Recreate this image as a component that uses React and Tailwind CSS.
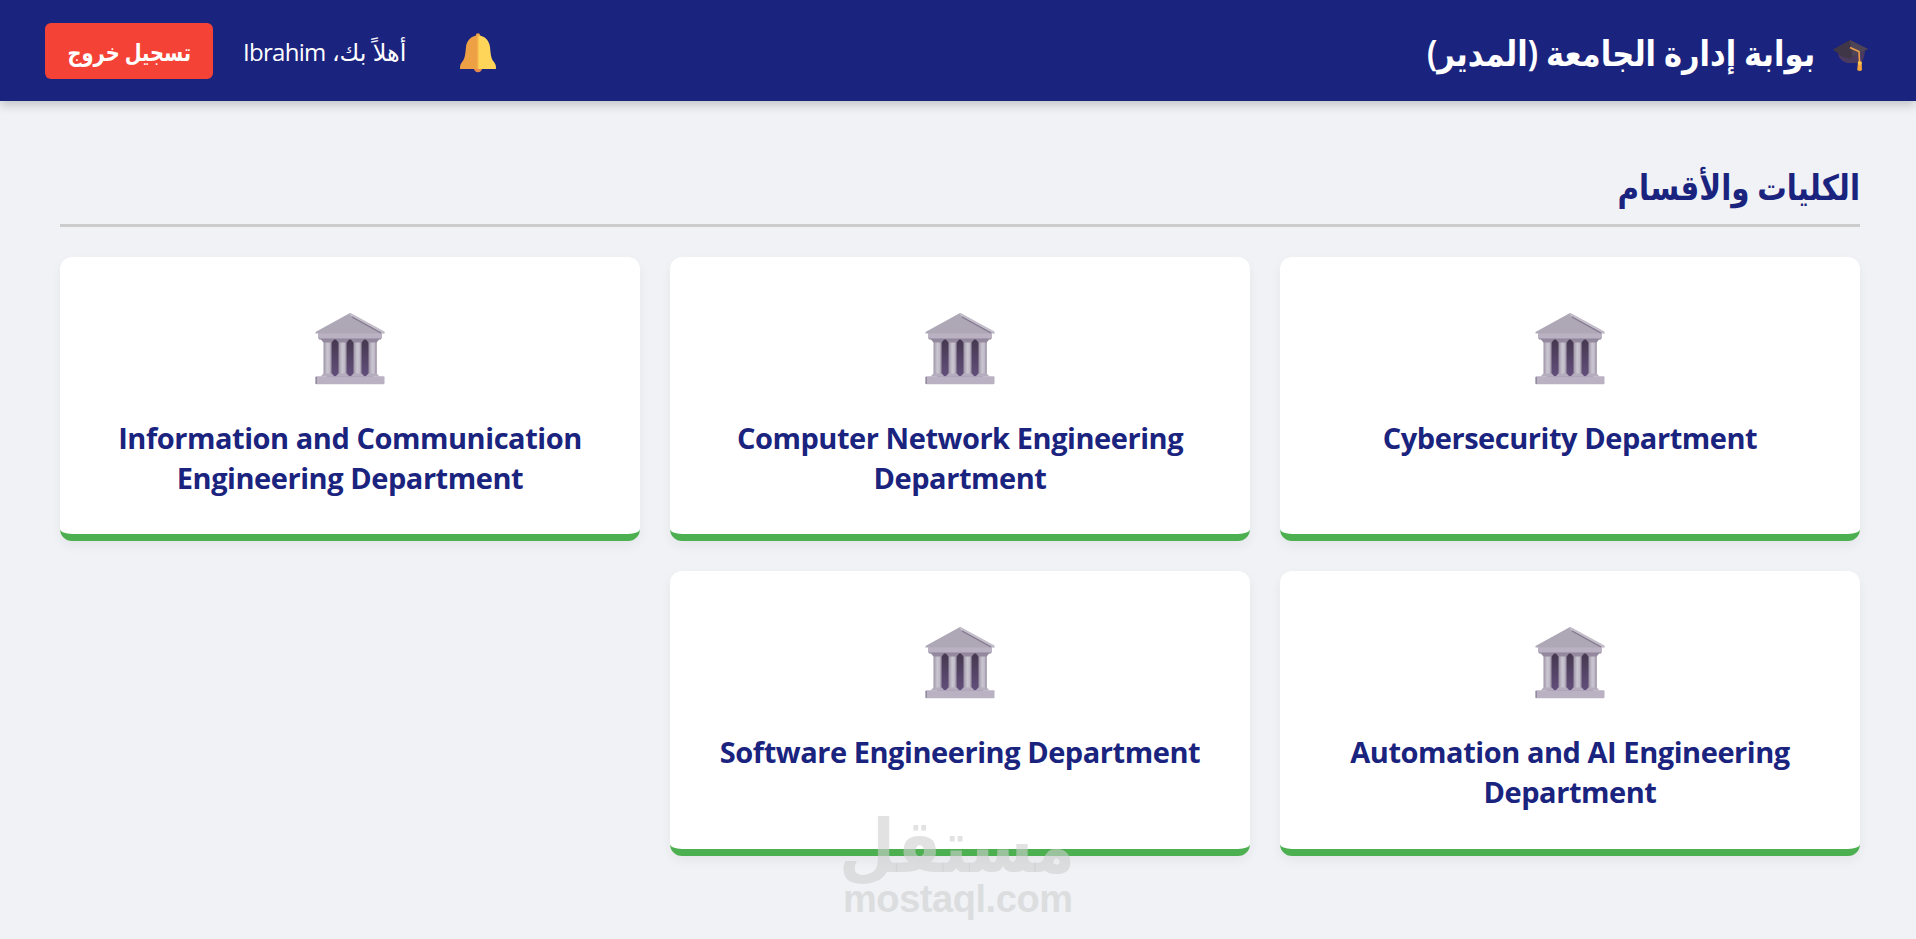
import React from "react";

const departments = [
  "Cybersecurity Department",
  "Computer Network Engineering Department",
  "Information and Communication Engineering Department",
  "Automation and AI Engineering Department",
  "Software Engineering Department",
];

function GraduationCap() {
  return (
    <svg className="mt-[10px] h-[38px] w-[38px]" viewBox="0 0 38 38">
      <path d="M6 15 L7 20 Q11 26 17 26 L28 26 Q31 24 32 20 L33 14 Z" fill="#4b3a60" />
      <path d="M1 12.5 L18 3 L36 12 L20.5 20 L17 22 L11 20 Z" fill="#3f3648" />
      <path d="M18 3 L36 12 L20.5 20 Z" fill="#4d4458" />
      <path d="M18 10.5 L27 14.5 L27.6 27" fill="none" stroke="#f0a04b" strokeWidth="1.6" />
      <path d="M26 25 H29.6 L30 33 Q28 35 25.2 33 Z" fill="#f6a33f" />
      <circle cx="27.8" cy="26" r="2" fill="#fbc14e" />
    </svg>
  );
}

function Bell() {
  return (
    <svg className="mt-[5px] h-[40px] w-[36px]" viewBox="0 0 36 40">
      <defs>
        <linearGradient id="bell" x1="0" x2="1">
          <stop offset="0.46" stopColor="#eea045" />
          <stop offset="0.54" stopColor="#ffd559" />
        </linearGradient>
      </defs>
      <circle cx="18" cy="2.4" r="2.2" fill="#eb9f47" />
      <circle cx="18" cy="35" r="4.2" fill="#e5894f" />
      <path
        d="M18 2.5 C25 2.5 29.4 8 30 14 C30.6 20 30.8 25 33.6 28.6 C35.6 31 36 32.5 36 36 H0 C0 32.5 .4 31 2.4 28.6 C5.2 25 5.4 20 6 14 C6.6 8 11 2.5 18 2.5 Z"
        fill="url(#bell)"
      />
    </svg>
  );
}

function Building() {
  return (
    <svg className="h-[72px] w-[70px] shrink-0" viewBox="0 0 70 72">
      <defs>
        <linearGradient id="gap" x1="0" x2="0" y1="0" y2="1">
          <stop offset="0" stopColor="#45384f" />
          <stop offset="1" stopColor="#634f7c" />
        </linearGradient>
        <linearGradient id="column" x1="0" x2="1">
          <stop offset="0" stopColor="#9c93a5" />
          <stop offset="0.45" stopColor="#cac6d1" />
          <stop offset="0.75" stopColor="#bfb9c7" />
          <stop offset="1" stopColor="#8a7f94" />
        </linearGradient>
      </defs>
      <rect x="12" y="26" width="46" height="38" fill="url(#gap)" />
      {[8.5, 23.5, 38.5, 53.5].map((x) => (
        <g key={x}>
          <rect x={x} y="28" width="8.2" height="35" fill="url(#column)" />
          <path d={`M${x - 3} 26 H${x + 11} L${x + 8.2} 29.5 H${x} Z`} fill="#94899e" />
          <path d={`M${x} 60.5 H${x + 8.2} L${x + 11} 63.5 H${x - 3} Z`} fill="#b5adbe" />
        </g>
      ))}
      <rect x="3" y="20" width="64" height="6" rx="1" fill="#bab2c3" />
      <rect x="4" y="25.5" width="62" height="1" fill="#8f8499" />
      <path d="M35 0 L69.5 19 V20.5 H0.5 V19 Z" fill="#aea7b6" />
      <path d="M35 1 L69 19.5" stroke="#c4bfca" strokeWidth="2" />
      <path d="M37 4 L66 20" stroke="#857a91" strokeWidth="1.3" />
      <rect x="0.5" y="63.3" width="69" height="8" rx="1" fill="#bab2c3" />
      <rect x="0.5" y="64" width="1.5" height="7" fill="#9389a0" />
    </svg>
  );
}

function DepartmentCard({ name }) {
  return (
    <div className="flex h-[284.4px] flex-col items-center rounded-[12px] border-b-[7px] border-[#4caf50] bg-white px-10 pt-14 shadow-[0_5px_12px_rgba(0,0,0,0.05)]">
      <Building />
      <h3
        dir="ltr"
        className="mt-[33px] text-center text-[29px] leading-[40px] font-bold tracking-[-0.45px] text-[#1a237e]"
      >
        {name}
      </h3>
    </div>
  );
}

function Watermark() {
  return (
    <svg
      className="absolute top-[780px] left-[800px] h-[159px] w-[320px]"
      viewBox="-20 -20 320 159"
      fill="#cfcfd1"
      fillOpacity="0.6"
    >
      <text
        x="255"
        y="72"
        textLength="236"
        lengthAdjust="spacingAndGlyphs"
        fontSize="74"
        fontWeight="bold"
        direction="rtl"
        fontFamily="DejaVu Sans, sans-serif"
      >
        مستقل
      </text>
      <text
        x="23"
        y="112"
        textLength="230"
        fontSize="38"
        fontWeight="bold"
        direction="ltr"
        fontFamily="Liberation Sans, sans-serif"
      >
        mostaql.com
      </text>
    </svg>
  );
}

export default function App() {
  return (
    <div
      dir="rtl"
      className="relative h-[939px] overflow-hidden bg-[#f0f2f5] font-['Open_Sans','DejaVu_Sans',sans-serif]"
    >
      <header className="flex h-[101px] items-center justify-between bg-[#1a237e] pr-[46px] pl-[45px] text-white shadow-[0_4px_10px_rgba(0,0,0,0.2)]">
        <div className="flex items-center gap-[17px]">
          <GraduationCap />
          <h1 className="origin-right scale-x-[0.872] pt-[6px] text-[35px] font-bold whitespace-nowrap">
            بوابة إدارة الجامعة (المدير)
          </h1>
        </div>
        <div className="flex items-center">
          <Bell />
          <span className="mr-[54px] pt-[3px] text-[24px] whitespace-nowrap">
            أهلاً بك، <span className="tracking-[-0.7px]">Ibrahim</span>
          </span>
          <button className="mr-[30px] flex h-[56px] w-[168px] items-center justify-center rounded-[6px] bg-[#f44336] pt-[3px] text-[24px] font-bold whitespace-nowrap">
            <span className="scale-x-[0.81]">تسجيل خروج</span>
          </button>
        </div>
      </header>
      <main className="pt-[50px] pr-[56px] pl-[60px]">
        <div className="h-[76px] border-b-[3px] border-[#ccc] pt-[10px]">
          <h2 className="origin-right scale-x-[0.84] text-[35px] font-semibold text-[#1a237e]">
            الكليات والأقسام
          </h2>
        </div>
        <div className="mt-[30px] grid grid-cols-3 gap-[30px]">
          {departments.map((name) => (
            <DepartmentCard key={name} name={name} />
          ))}
        </div>
      </main>
      <Watermark />
    </div>
  );
}
